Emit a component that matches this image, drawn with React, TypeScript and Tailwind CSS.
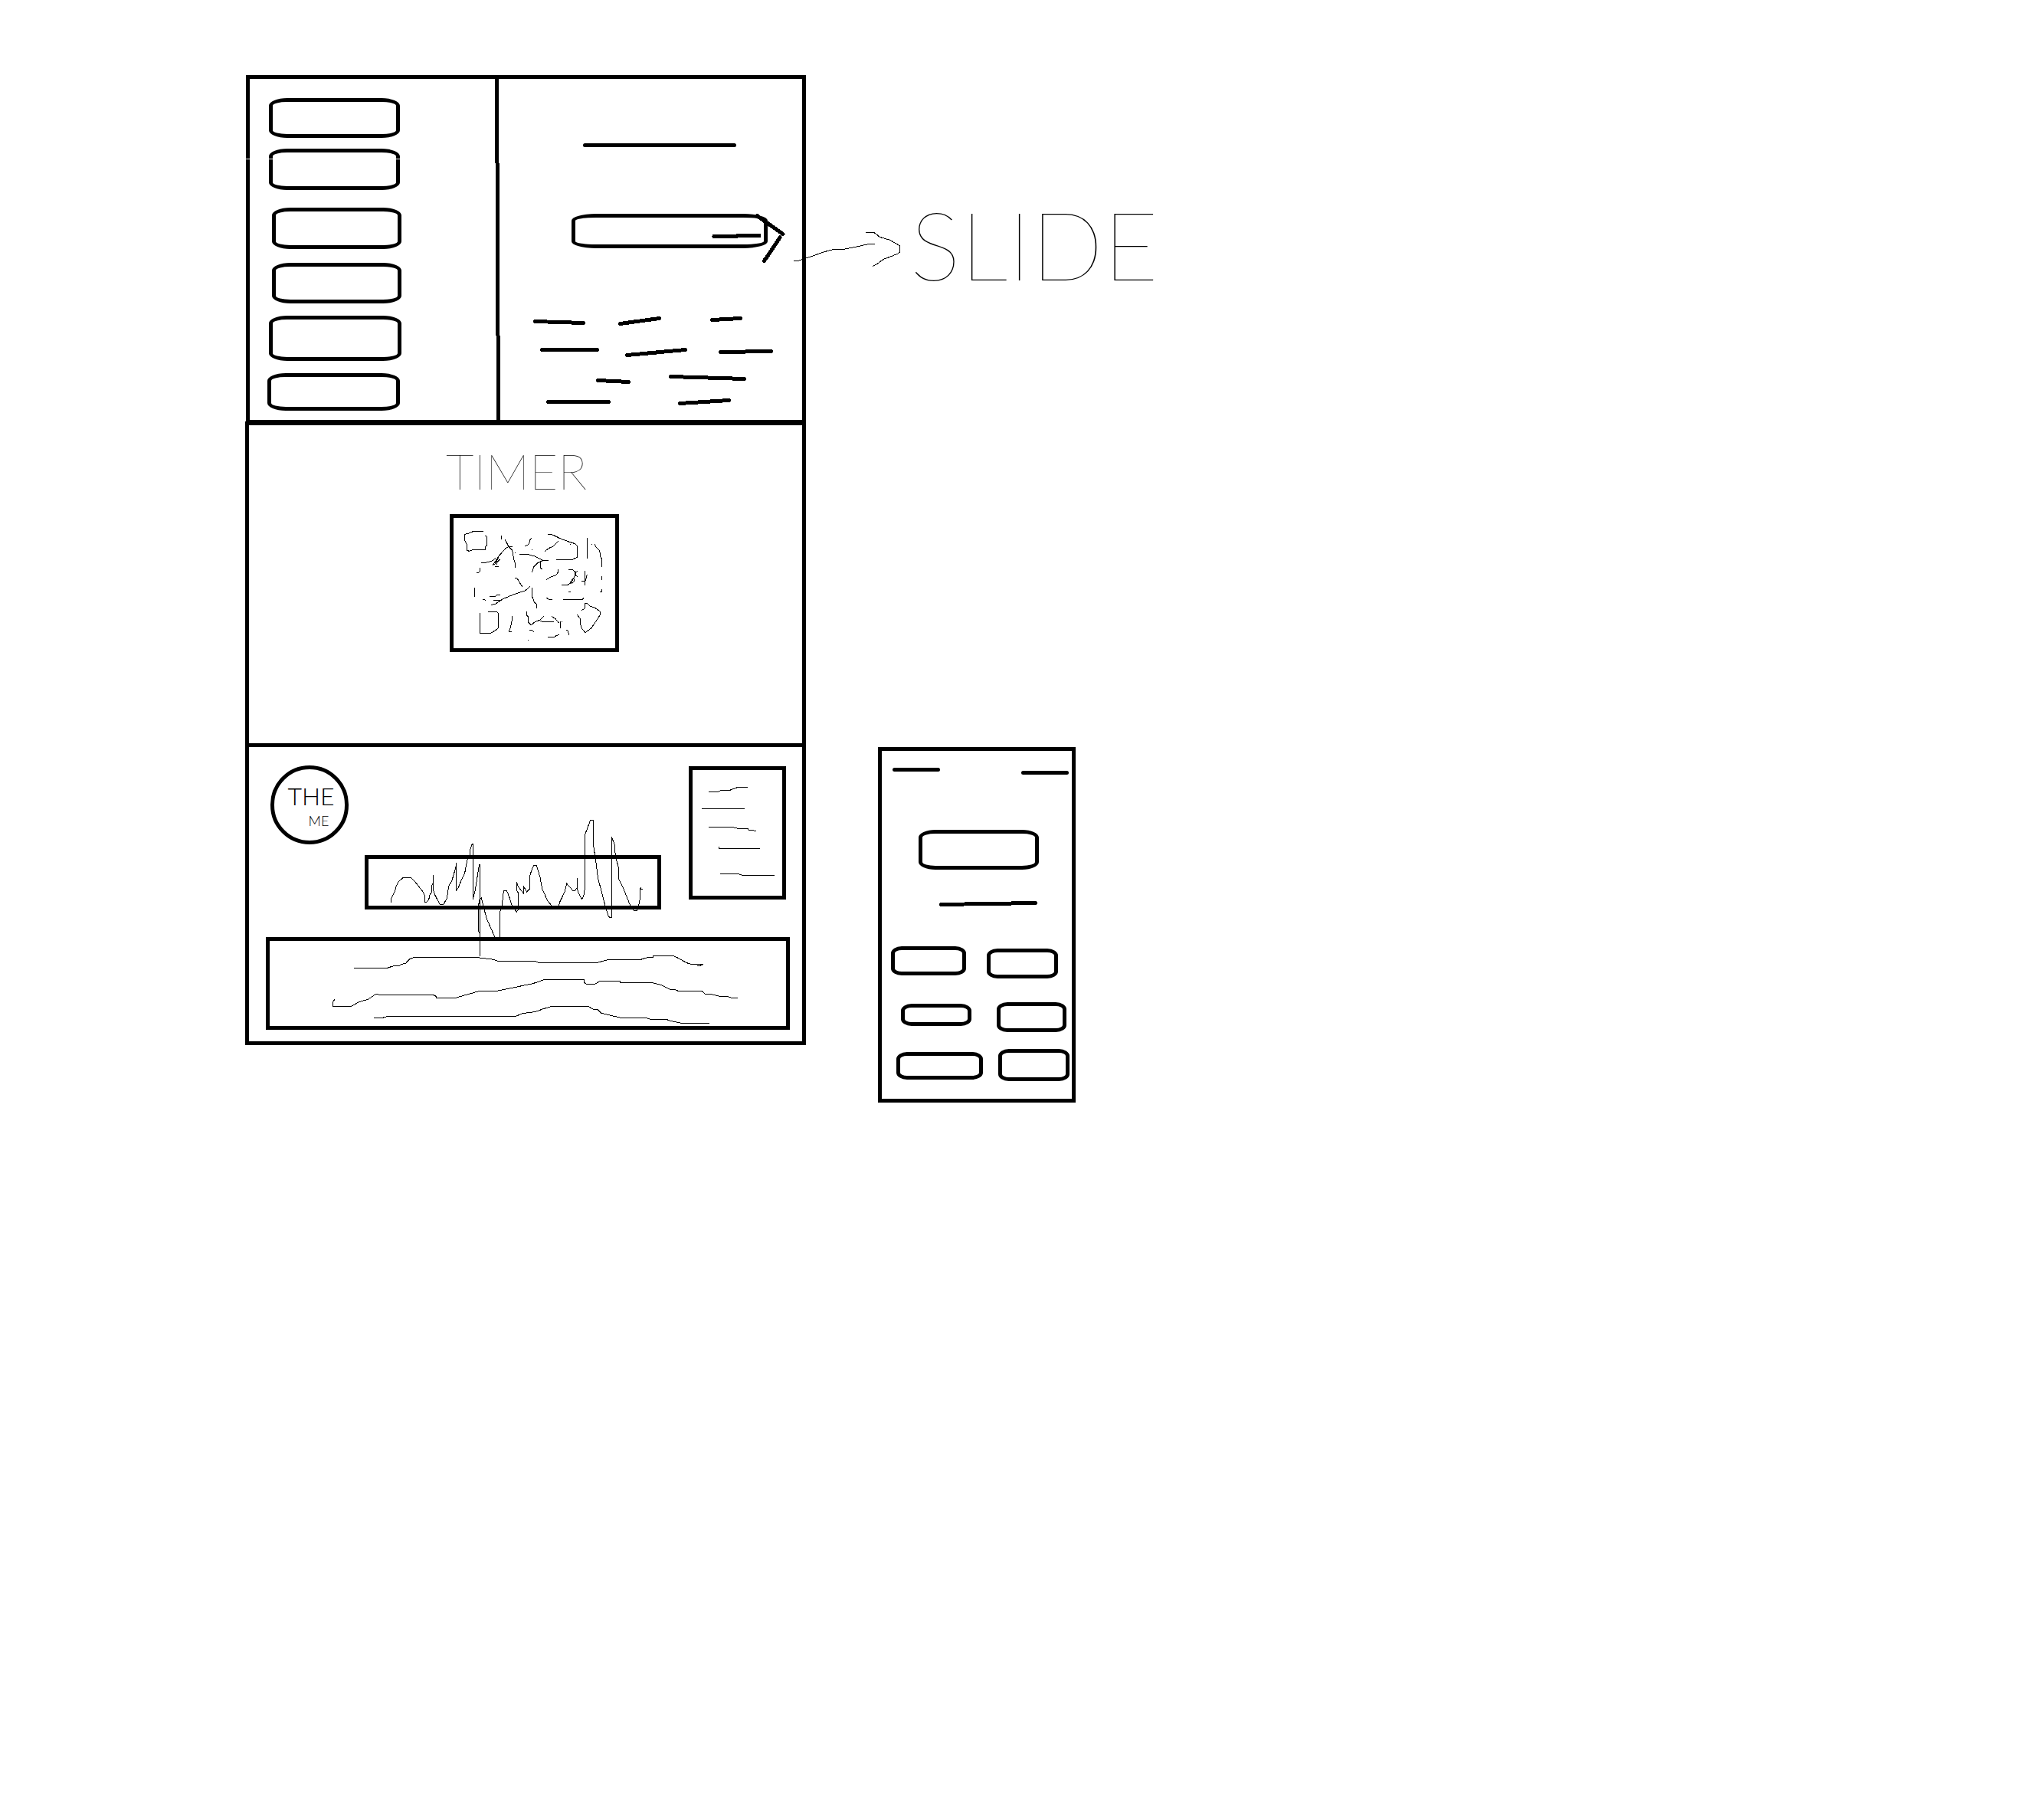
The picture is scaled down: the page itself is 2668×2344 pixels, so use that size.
import type { ReactNode } from "react";

const FIELD = "block shrink-0 border-[5px] border-black bg-white";

const menuItems = [
  { label: "Menu item 1", cls: "ml-[25px] h-[52px] w-[171px]" },
  { label: "Menu item 2", cls: "ml-[25px] mt-[14px] h-[54px] w-[171px]" },
  { label: "Menu item 3", cls: "ml-[29px] mt-[23px] h-[54px] w-[169px]" },
  { label: "Menu item 4", cls: "ml-[29px] mt-[18px] h-[53px] w-[169px]" },
  { label: "Menu item 5", cls: "ml-[25px] mt-4 h-[59px] w-[173px]" },
  { label: "Menu item 6", cls: "ml-[23px] mt-4 h-[49px] w-[173px]" },
];

const phoneRows = [
  {
    cls: "mt-[52px]",
    items: [
      { label: "Option 1", cls: "ml-3 h-[38px] w-[98px]" },
      { label: "Option 2", cls: "ml-[27px] mt-[3px] h-[39px] w-[93px]" },
    ],
  },
  {
    cls: "mt-[31px]",
    items: [
      { label: "Option 3", cls: "ml-[25px] mt-[2px] h-[29px] w-[92px]" },
      { label: "Option 4", cls: "ml-[33px] h-[39px] w-[91px]" },
    ],
  },
  {
    cls: "mt-[22px]",
    items: [
      { label: "Option 5", cls: "ml-[19px] mt-1 h-[36px] w-[113px]" },
      { label: "Option 6", cls: "ml-5 h-[42px] w-[93px]" },
    ],
  },
];

/* Thin one-pixel pen strokes. */
function Pen({ box, cls, paths }: { box: string; cls: string; paths: string[] }) {
  return (
    <svg
      viewBox={box}
      preserveAspectRatio="none"
      className={`block overflow-visible ${cls}`}
      fill="none"
      stroke="#000"
      strokeWidth="1"
      shapeRendering="crispEdges"
      aria-hidden="true"
    >
      {paths.map((d) => (
        <path key={d} d={d} vectorEffect="non-scaling-stroke" />
      ))}
    </svg>
  );
}

/* Thick round-tipped marker strokes. */
function Marker({ box, cls, children }: { box: string; cls: string; children: ReactNode }) {
  return (
    <svg
      viewBox={box}
      className={`block overflow-visible ${cls}`}
      fill="none"
      stroke="#000"
      strokeWidth="5"
      strokeLinecap="round"
      shapeRendering="crispEdges"
      aria-hidden="true"
    >
      {children}
    </svg>
  );
}

const codePaths = [
  "M153 100H114L94 109L80 112V136L88 152L90 175L97 178L110 173L160 172V160L166 157V120L160 118",
  "M223 118V133",
  "M238 133L252 160L266 175L271 205L277 225V244",
  "M266 160H252L240 167L214 196L190 233",
  "M145 223H163L190 215L200 205",
  "M217 211L205 223V232M199 238H212M211 205L197 230",
  "M277 184h3M343 172h3M493 151h3M577 151h3M328 526h3M460 454h3",
  "M343 127L337 130L332 147L326 155L316 157",
  "M295 190H325L357 199L385 214H407M388 213L365 225L350 240L343 262",
  "M377 220V244L383 250",
  "M405 112H420L455 129L490 142L512 149L521 157V203L510 206L502 211H438",
  "M447 139L425 160L410 166L393 179",
  "M559 126V206",
  "M588 151L597 166L608 176L612 200L616 207V239",
  "M616 276V290M616 328V337H609",
  "M139 244V256L135 262H127",
  "M118 321V356M151 367L161 370",
  "M277 283H284L305 317",
  "M335 317L316 333L270 348L230 365L200 385L184 388",
  "M178 355H200L205 349H218M193 370H220L235 363",
  "M343 321V353L352 378L361 385V401",
  "M445 250V262L435 273L415 280L400 290",
  "M486 250H500L512 258L513 270L506 285L494 303L483 310H460",
  "M522 256L513 262V272L522 278M508 285V296L500 303L495 298L505 283",
  "M550 255V311M559 270L552 295H538",
  "M487 337h8M400 361L410 367H423M465 367H540L546 361",
  "M139 420V499H182L200 488L211 480V422L205 415H172",
  "M265 433V448L259 478L252 494H264",
  "M322 414V428L328 435V455L340 467L355 455L373 448L390 433",
  "M371 448L382 454H429M421 433L435 443L449 460M454 454V480",
  "M334 488H343L350 494M405 514H430L440 508L450 505M478 487L484 490L488 506",
  "M538 410L550 402V382L560 383L572 394L590 400L611 415V425L597 448L575 480L552 497L538 480L532 460V442L520 427",
];

const wavePaths = [
  "M151 383V371L165 343L172 318L180 302L198 287H230L250 308L277 343L284 360V383H290L299 372L303 355L310 343V318L316 308V277V333L325 358L343 391H357L370 367L377 320L390 297L400 262L406 240V227V337L415 325L428 292L440 268L450 215L460 200V180L468 157L472 154V371L480 340L488 290L496 240L499 233V593",
  "M497 505L493 490V400L499 367L505 366L513 400L527 450L545 490L558 520",
  "M577 520V425L586 395L592 338H604L613 358L625 396L643 421L649 412V345L643 335V304L650 322L670 348V320L683 342L694 331V285L700 262L710 238H721L735 285L743 330L765 378L780 396",
  "M809 396L812 382L830 345L839 310L858 330L862 337H872L880 325V287V330L888 352L898 371L905 360L910 330V120L932 61H943V155L952 213L962 290L978 350L990 397L1003 438L1008 442H1015V127L1026 155L1031 210L1042 245V290L1060 325L1088 396L1102 415H1115L1121 395L1126 370V332L1130 325V331H1136",
];

const notePaths = [
  "M135 160H171L184 154H218L250 142H288",
  "M108 226H276",
  "M135 298H225L250 304H288L291 310H310L314 313H321",
  "M175 375V382H336",
  "M180 481H249L267 487H393",
];

const footerPaths = [
  "M318 190H409L428 181H442L447 175L459 172L470 155L481 149H654L700 157L710 163H813L822 169H982L1013 157H1101L1118 149H1135V142H1188L1200 149L1226 170L1240 176H1272L1262 181H1255",
  "M265 313L260 325V340H311L332 323L356 313L378 292L388 295H534L543 302V307H595L632 292L661 280H708L800 253L818 246L838 235H947V248L953 253H975L990 241H1044V247H1130L1155 256L1180 274H1192L1203 280H1266L1277 292H1292L1315 301H1335L1349 307H1365",
  "M372 385H396L411 379H760L778 368L811 362L835 350L858 340H957L971 352H982L992 366L1018 376L1047 385H1115L1126 391H1171L1180 397L1211 406H1287",
];

function TopSection() {
  return (
    <section className="relative ml-px flex border-[5px] border-black">
      <nav aria-label="Menu" className="min-w-0 flex-[320] pb-3 pt-[25px]">
        {menuItems.map((m) => (
          <button key={m.label} type="button" aria-label={m.label} className={`${FIELD} rounded-[24px/10px] ${m.cls}`} />
        ))}
      </nav>
      <svg viewBox="0 0 7 445" className="w-[7px] shrink-0 self-stretch" preserveAspectRatio="none" shapeRendering="crispEdges" aria-hidden="true">
        <path d="M0 0H5V110H6V335H7V445H2V335H1V110H0Z" />
      </svg>
      <div className="min-w-0 flex-[394]">
        <div className="ml-[108px] mt-[84px] h-[5px] w-[200px] rounded-full bg-black" />
        <button type="button" aria-label="Slide" className={`${FIELD} relative ml-[93px] mt-[87px] h-[45px] w-[256px] rounded-[32px/9px]`}>
          <Marker box="929 278 96 66" cls="absolute left-[178px] top-[-6px] h-[66px] w-[96px]">
            <path d="M932 308.5L961 308.5L963 307.5H991" />
            <path d="M988 281.5L1022 305.5" />
            <path d="M1018 310L997.5 340.5" />
          </Marker>
        </button>
        <Marker box="695 411 315 120" cls="mb-[17px] ml-[42px] mt-[87px] h-[120px] w-[315px]">
          <path d="M698.5 419.5L761.5 421.5M809.5 422.5L860.5 415.5M929.5 417.5L966.5 415.5" />
          <path d="M707.5 456.5H779.5M818.5 463.5L894.5 456.5M940.5 459.5L1006.5 458.5" />
          <path d="M780.5 496.5L820.5 498.5M875.5 491.5L971.5 494.5" />
          <path d="M715.5 524.5H794.5M887.5 526.5L951.5 522.5" />
        </Marker>
      </div>
      <div className="absolute left-[-5px] top-[104px] h-px w-[201px] bg-white" />
      <div className="absolute left-full top-[151px] ml-[-13px] flex items-start">
        <Pen
          box="42 180 426 150"
          cls="mt-[46px] h-[50px] w-[142px] shrink-0"
          paths={[
            "M49 301H67L100 290L165 267L204 256H245L300 245L340 236H366",
            "M331 190H362L385 208L425 220L463 242V267L455 274L400 295L375 313L358 322",
          ]}
        />
        <p className="ml-3 text-[124px] font-thin leading-[128px]">SLIDE</p>
      </div>
    </section>
  );
}

function TimerSection() {
  return (
    <section className="mt-[-3px] border-[5px] border-black pb-[119px] pt-7">
      <h2 className="ml-[257px] text-[64px] font-thin leading-[64px]">TIMER</h2>
      <div className="ml-[262px] mt-6 w-[221px] border-[5px] border-black">
        <Pen box="36 48 633 510" cls="h-[170px] w-full" paths={codePaths} />
      </div>
    </section>
  );
}

function BottomSection() {
  return (
    <section className="border-[5px] border-t-0 border-black pb-[15px]">
      <div className="flex items-start">
        <button
          type="button"
          className="ml-7 mt-6 flex h-[103px] w-[102px] shrink-0 flex-col items-center justify-center rounded-full border-[5px] border-black font-light"
        >
          <span className="block pl-1 text-[32px] leading-[40px]">THE</span>
          <span className="block pl-6 text-[18px] leading-[24px]">ME</span>
        </button>
        <div className="relative ml-[21px] mt-[141px] min-w-0 flex-1 border-[5px] border-black">
          <Pen box="63 213 1131 183" cls="h-[61px] w-full" paths={wavePaths} />
        </div>
        <div className="ml-9 mr-[21px] mt-[25px] w-[127px] shrink-0 border-[5px] border-black">
          <Pen box="72 75 351 492" cls="h-[164px] w-full" paths={notePaths} />
        </div>
      </div>
      <div className="ml-[22px] mr-4 mt-9 border-[5px] border-black">
        <Pen box="88 84 1409 333" cls="h-[111px] w-full" paths={footerPaths} />
      </div>
    </section>
  );
}

function Phone() {
  return (
    <aside className="mt-[877px] border-[5px] border-black pb-[23px]">
      <div className="flex items-start justify-between pl-[14px] pr-1 pt-[22px]">
        <div className="h-[5px] w-[62px] rounded-full bg-black" />
        <div className="mt-1 h-[5px] w-[62px] rounded-full bg-black" />
      </div>
      <button type="button" aria-label="Main action" className={`${FIELD} ml-12 mt-[72px] h-[52px] w-[157px] rounded-[22px/10px]`} />
      <Marker box="1226 1176 128 7" cls="ml-[75px] mt-[41px] h-[7px] w-[128px]">
        <path d="M1228.5 1180.5L1351.5 1178.5" />
      </Marker>
      {phoneRows.map((row) => (
        <div key={row.cls} className={`flex items-start ${row.cls}`}>
          {row.items.map((b) => (
            <button key={b.label} type="button" aria-label={b.label} className={`${FIELD} rounded-[14px/9px] ${b.cls}`} />
          ))}
        </div>
      ))}
    </aside>
  );
}

export default function App() {
  return (
    <div className="grid min-h-screen grid-cols-[320fr_732fr_94fr_258fr_1264fr] bg-white pt-[98px] font-['Lato',sans-serif] text-black">
      <main className="col-start-2 self-start">
        <TopSection />
        <TimerSection />
        <BottomSection />
      </main>
      <div className="col-start-4 flex flex-col">
        <Phone />
      </div>
    </div>
  );
}
